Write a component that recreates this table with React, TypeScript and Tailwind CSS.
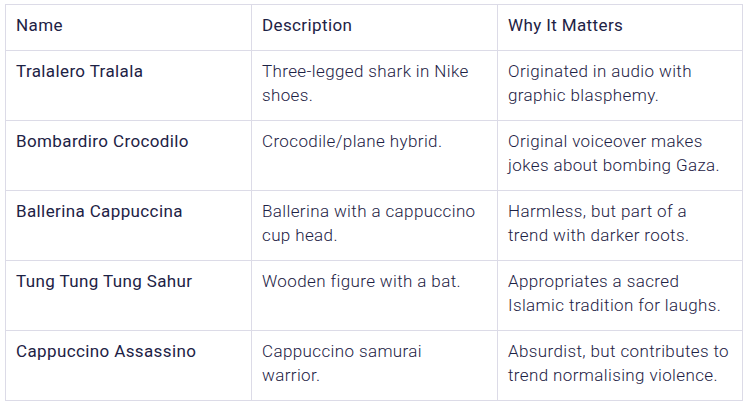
import React from 'react';

const rows = [
  {
    name: 'Tralalero Tralala',
    description: 'Three-legged shark in Nike shoes.',
    why: 'Originated in audio with graphic blasphemy.',
  },
  {
    name: 'Bombardiro Crocodilo',
    description: 'Crocodile/plane hybrid.',
    why: 'Original voiceover makes jokes about bombing Gaza.',
  },
  {
    name: 'Ballerina Cappuccina',
    description: 'Ballerina with a cappuccino cup head.',
    why: 'Harmless, but part of a trend with darker roots.',
  },
  {
    name: 'Tung Tung Tung Sahur',
    description: 'Wooden figure with a bat.',
    why: 'Appropriates a sacred Islamic tradition for laughs.',
  },
  {
    name: 'Cappuccino Assassino',
    description: 'Cappuccino samurai warrior.',
    why: 'Absurdist, but contributes to trend normalising violence.',
  },
];

const cell = 'border border-[#dcdbe7] pl-[10px] pr-[12px] pt-2 align-top';

export default function App() {
  return (
    <div className="min-h-[406px] bg-white pl-[5px] pt-[4px] font-['Roboto',sans-serif] text-[17px] leading-6 tracking-[0.38px] text-[#1d2245]">
      <table className="w-[738px] table-fixed border-collapse">
        <colgroup>
          <col className="w-[246px]" />
          <col className="w-[246px]" />
          <col />
        </colgroup>
        <thead>
          <tr className="h-[46px]">
            <th className={`${cell} text-left font-normal`}>Name</th>
            <th className={`${cell} text-left font-normal`}>Description</th>
            <th className={`${cell} text-left font-normal`}>Why It Matters</th>
          </tr>
        </thead>
        <tbody>
          {rows.map((row) => (
            <tr key={row.name} className="h-[70px]">
              <td className={`${cell} font-normal`}>{row.name}</td>
              <td className={`${cell} font-light`}>{row.description}</td>
              <td className={`${cell} font-light`}>{row.why}</td>
            </tr>
          ))}
        </tbody>
      </table>
    </div>
  );
}
